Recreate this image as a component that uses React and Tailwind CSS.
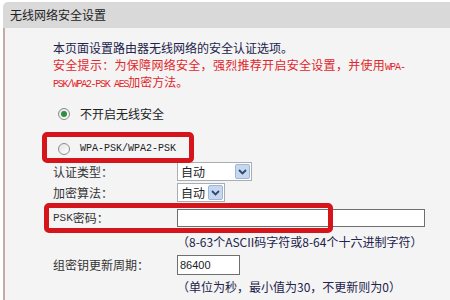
import React from "react";

function Radio({ checked }) {
  return (
    <span className="relative w-[12px] h-[12px] rounded-full border border-[#8c8c8c] bg-gradient-to-br from-[#e2e2e2] to-white flex items-center justify-center">
      {checked && <span className="w-[6px] h-[6px] rounded-full bg-[#2f8f3a]" />}
    </span>
  );
}

function Select({ width }) {
  return (
    <div className={`h-[19px] ${width} bg-white border border-[#a9aeb4] flex items-center justify-between pl-[3px] pr-[1px]`}>
      <span className="text-[12px] text-[#222]">自动</span>
      <span className="w-[15px] h-[15px] bg-[#c6d8f0] border border-[#9fb6d6] rounded-[2px] flex items-center justify-center">
        <svg width="9" height="6" viewBox="0 0 9 6">
          <path d="M1 1 L4.5 4.5 L8 1" fill="none" stroke="#34466e" strokeWidth="1.8" />
        </svg>
      </span>
    </div>
  );
}

export default function App() {
  const mono = "font-['Liberation_Mono',monospace] leading-none";
  return (
    <div className="w-[450px] h-[300px] bg-white overflow-hidden font-['Noto_Sans_CJK_SC',sans-serif] leading-none">
      {/* HEADER */}
      <div className="ml-[3px] mt-[2px] h-[26px] bg-[#d9d9d9] rounded-tl-[5px] flex items-center pl-[7px] text-[12px] text-[#222]">
        无线网络安全设置
      </div>

      {/* BODY */}
      <div className="relative ml-[3px] h-[272px] bg-[#f4f4f4] border-l-2 border-[#c6a9a9] pl-[48px] pt-[11px]">
        <div className="text-[12px]">
          <p className="h-[17px] leading-[17px] text-[#22224a]">本页面设置路由器无线网络的安全认证选项。</p>
          <p className="h-[17px] leading-[17px] text-[#e0262b] tracking-[0.3px]">
            安全提示：为保障网络安全，强烈推荐开启安全设置，并使用
            <span className={`${mono} text-[10px] tracking-[-1px]`}>WPA-</span>
          </p>
          <p className="h-[17px] leading-[17px] text-[#e0262b]">
            <span className={`${mono} text-[10px] tracking-[-1.3px]`}>PSK/WPA2-PSK AES</span>
            加密方法。
          </p>
        </div>

        {/* RADIOS */}
        <div className="mt-[14px] h-[20px] flex items-center pl-[5px] gap-[10px]">
          <Radio checked />
          <span className="text-[12px] text-[#222]">不开启无线安全</span>
        </div>
        <div className="mt-[15px] h-[20px] flex items-center pl-[5px] gap-[10px]">
          <Radio />
          <span className={`${mono} text-[10px] text-[#222]`}>WPA-PSK/WPA2-PSK</span>
        </div>

        {/* FIELDS */}
        <div className="mt-[3px] h-[19px] flex items-center">
          <span className="w-[124px] text-[12px] text-[#333]">认证类型：</span>
          <Select width="w-[75px]" />
        </div>
        <div className="mt-[2px] h-[19px] flex items-center">
          <span className="w-[124px] text-[12px] text-[#333]">加密算法：</span>
          <Select width="w-[48px]" />
        </div>
        <div className="mt-[7px] h-[18px] flex items-center">
          <span className="w-[124px] flex items-center text-[12px] text-[#333]">
            <span className={`${mono} text-[11px]`}>PSK</span>密码：
          </span>
          <div className="w-[248px] h-[18px] bg-white border border-[#6f6f6f]" />
        </div>
        <div className="mt-[6px] h-[18px] flex items-center pl-[124px] text-[12px] text-[#22224a]">
          （8-63个ASCII码字符或8-64个十六进制字符）
        </div>
        <div className="mt-[4px] h-[20px] flex items-center">
          <span className="w-[124px] text-[12px] text-[#333]">组密钥更新周期：</span>
          <div className="w-[63px] h-[20px] bg-white border border-[#6f6f6f] flex items-center pl-[2px] text-[11px] text-[#222] font-['Liberation_Sans',sans-serif]">
            86400
          </div>
        </div>
        <div className="mt-[3px] h-[18px] flex items-center pl-[124px] text-[12px] text-[#22224a]">
          （单位为秒，最小值为30，不更新则为0）
        </div>

        {/* ANNOTATIONS */}
        <div className="absolute left-[37px] top-[104px] w-[152px] h-[31px] border-[5px] border-[#d5141b] rounded-[5px]" />
        <div className="absolute left-[39px] top-[175px] w-[289px] h-[30px] border-[5px] border-[#d5141b] rounded-[5px]" />
      </div>
    </div>
  );
}
